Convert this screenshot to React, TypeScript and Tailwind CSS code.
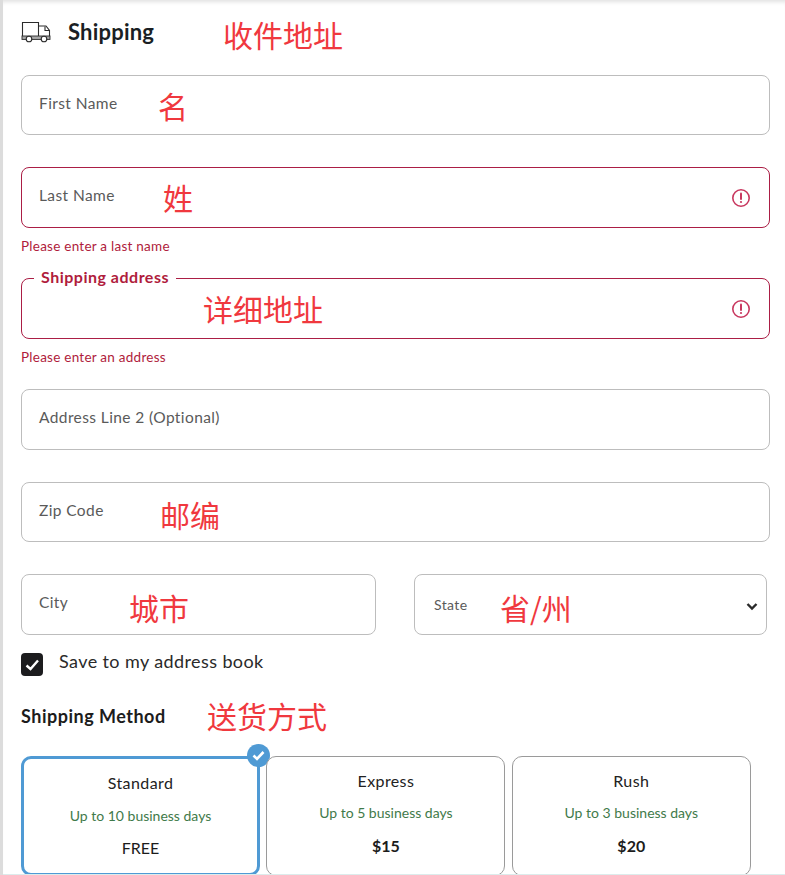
const ui = { fontFamily: 'Lato, "Open Sans", sans-serif' };

function Note({ text, className }: { text: string; className: string }) {
  return (
    <span
      className={`absolute whitespace-nowrap text-[30px] leading-[36px] text-[#f0383e] font-['Noto_Sans_CJK_SC',sans-serif] ${className}`}
    >
      {text}
    </span>
  );
}

function TruckIcon() {
  return (
    <svg width="30" height="22" viewBox="0 0 30 22" fill="none" stroke="#2b2b2b" strokeWidth="1.1">
      <path d="M1.5 15V1.5H17.5V15" />
      <path d="M17.5 5H25L28.5 9.5V15" />
      <path d="M24 5.5V9.5H28.5" />
      <rect x="1" y="15" width="28" height="3.4" fill="#a8a8a8" stroke="#2b2b2b" strokeWidth="0.9" />
      <circle cx="8" cy="18" r="2.8" fill="#fff" />
      <circle cx="23" cy="18" r="2.8" fill="#fff" />
    </svg>
  );
}

function ErrorIcon() {
  return (
    <svg className="absolute right-[18px] top-1/2 -translate-y-1/2" width="20" height="20" viewBox="0 0 20 20" fill="none">
      <circle cx="10" cy="10" r="8.2" stroke="#c8385f" strokeWidth="1.6" />
      <path d="M10 5.5V11" stroke="#c8385f" strokeWidth="2" strokeLinecap="round" />
      <circle cx="10" cy="14" r="1.1" fill="#c8385f" />
    </svg>
  );
}

function Field({
  label,
  error,
  note,
  noteClass,
  className = "",
}: {
  label: string;
  error?: boolean;
  note?: string;
  noteClass?: string;
  className?: string;
}) {
  return (
    <div
      className={`relative flex h-[60px] items-center rounded-[8px] border pl-[17px] pb-[3px] ${
        error ? "border-[#ab1e45]" : "border-[#bdbdbd]"
      } ${className}`}
    >
      <span className="text-[15.5px] tracking-[0.4px] text-[#5a5a5a]">{label}</span>
      {note && noteClass && <Note text={note} className={noteClass} />}
      {error && <ErrorIcon />}
    </div>
  );
}

function ShipCard({
  name,
  days,
  price,
  selected,
}: {
  name: string;
  days: string;
  price: string;
  selected?: boolean;
}) {
  return (
    <div
      className={`relative flex h-[120px] w-[239px] shrink-0 flex-col items-center rounded-[10px] bg-white ${
        selected ? "border-[3px] border-[#4f9ad4] pt-[13px]" : "border border-[#9a9a9a] pt-[13px]"
      }`}
    >
      <div className="text-[16px] leading-[22px] tracking-[0.4px] text-[#222]">{name}</div>
      <div className={`text-[14px] leading-[22px] text-[#3f7a4a] ${selected ? "mt-[11px]" : "mt-[10px]"}`}>{days}</div>
      <div className={`text-[16px] leading-[22px] text-[#1c1c1c] ${selected ? "mt-[10px]" : "mt-[11px] font-bold"}`}>{price}</div>
      {selected && (
        <span className="absolute -right-[13px] -top-[15px] flex h-[23px] w-[23px] items-center justify-center rounded-full bg-[#4f9ad4]">
          <svg width="13" height="11" viewBox="0 0 13 11" fill="none" stroke="#fff" strokeWidth="2.6">
            <path d="M1.5 5.5L5 9L11.5 2" />
          </svg>
        </span>
      )}
    </div>
  );
}

export default function App() {
  return (
    <div
      style={ui}
      className="relative h-[875px] w-[785px] overflow-hidden border-l-[3px] border-[#dcdcdc] bg-white pl-[18px] shadow-[inset_0_5px_4px_-3px_rgba(0,0,0,0.12)]"
    >
      <header className="relative flex h-[75px] pb-[12px] items-center">
        <TruckIcon />
        <h1 className="ml-[17px] text-[22px] tracking-[0.2px] font-bold text-[#1a1f24]">Shipping</h1>
        <Note text="收件地址" className="left-[202px] top-[16px]" />
      </header>

      <div className="w-[749px]">
        <Field label="First Name" note="名" noteClass="left-[136px] top-[11px]" />

        <Field className="mt-[32px] h-[61px]" label="Last Name" error note="姓" noteClass="left-[141px] top-[11px]" />
        <p className="mt-[9px] text-[13.5px] leading-[18px] tracking-[0.25px] text-[#b01c3c]">Please enter a last name</p>

        <div className="relative mt-[23px] h-[61px] rounded-[8px] border border-[#ab1e45]">
          <span className="absolute -top-[11px] left-[12px] bg-white px-[7px] text-[16px] leading-[18px] tracking-[0.5px] font-bold text-[#b01c3c]">
            Shipping address
          </span>
          <Note text="详细地址" className="left-[181px] top-[11px]" />
          <ErrorIcon />
        </div>
        <p className="mt-[9px] text-[13.5px] leading-[18px] tracking-[0.25px] text-[#b01c3c]">Please enter an address</p>

        <Field className="mt-[23px] h-[61px]" label="Address Line 2 (Optional)" />

        <Field className="mt-[32px]" label="Zip Code" note="邮编" noteClass="left-[138px] top-[13px]" />

        <div className="mt-[32px] flex">
          <Field className="h-[61px] w-[355px]" label="City" note="城市" noteClass="left-[107px] top-[14px]" />
          <div className="relative ml-[38px] flex h-[61px] w-[353px] items-center rounded-[8px] border border-[#bdbdbd] pl-[19px]">
            <span className="text-[14px] tracking-[0.4px] text-[#5a5a5a]">State</span>
            <Note text="省/州" className="left-[85px] top-[14px]" />
            <svg className="absolute right-[8px] top-[27px]" width="12" height="9" viewBox="0 0 12 9" fill="none" stroke="#2a2a2a" strokeWidth="2.4">
              <path d="M1.5 2L6 6.5L10.5 2" />
            </svg>
          </div>
        </div>

        <label className="mt-[18px] flex h-[23px] items-center">
          <span className="flex h-[23px] w-[22px] items-center justify-center rounded-[4px] bg-[#1c1c1e]">
            <svg width="15" height="12" viewBox="0 0 15 12" fill="none" stroke="#fff" strokeWidth="2.4">
              <path d="M1.5 6.5L5.5 10L13 1.5" />
            </svg>
          </span>
          <span className="ml-[16px] pb-[7px] text-[18px] tracking-[0.4px] text-[#2a2a2a]">Save to my address book</span>
        </label>

        <div className="relative mt-[28px] h-[24px]">
          <h2 className="text-[18px] leading-[24px] tracking-[0.5px] font-bold text-[#1c1c1c]">Shipping Method</h2>
          <Note text="送货方式" className="left-[186px] -top-[7px]" />
        </div>

        <div className="mt-[28px] flex gap-[6.4px]">
          <ShipCard selected name="Standard" days="Up to 10 business days" price="FREE" />
          <ShipCard name="Express" days="Up to 5 business days" price="$15" />
          <ShipCard name="Rush" days="Up to 3 business days" price="$20" />
        </div>
      </div>
      <div className="absolute inset-x-0 bottom-0 h-px bg-[#dcecec]" />
    </div>
  );
}
